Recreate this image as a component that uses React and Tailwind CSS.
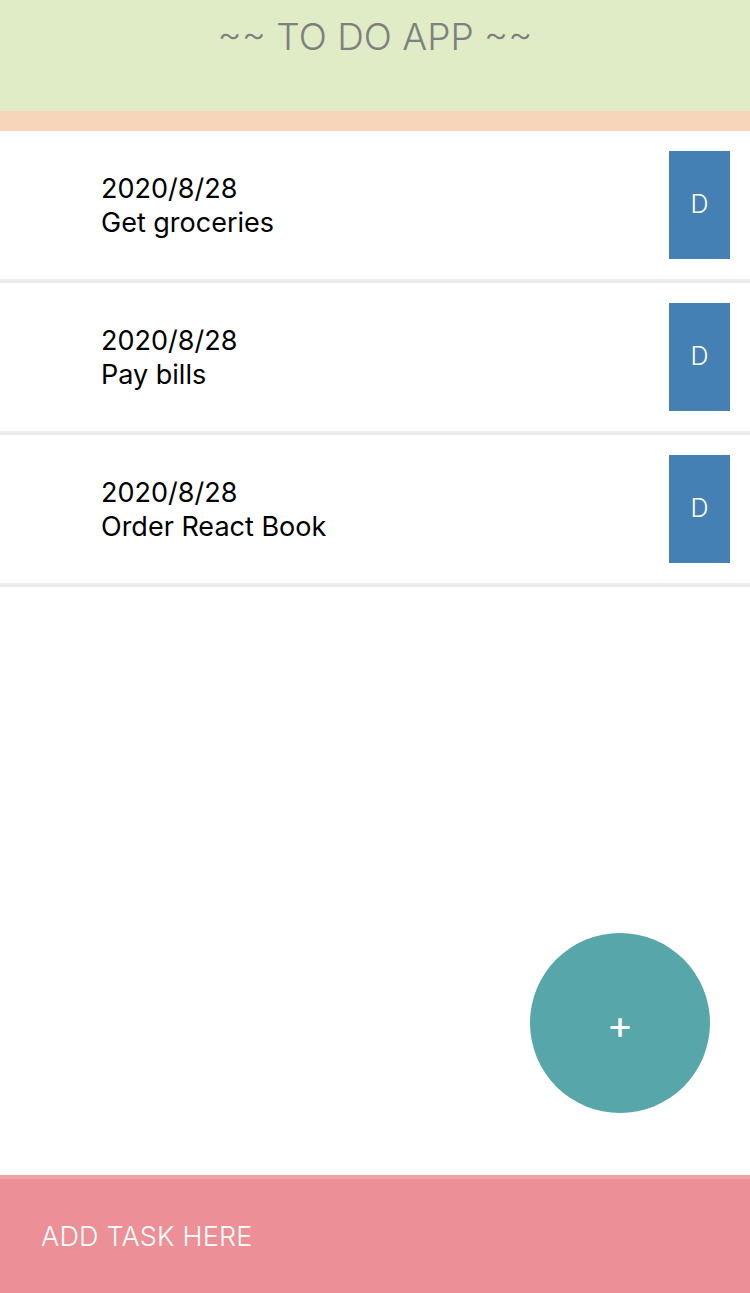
import React, { useState } from 'react';

const initialTasks = [
    { id: 1, date: '2020/8/28', text: 'Get groceries' },
    { id: 2, date: '2020/8/28', text: 'Pay bills' },
    { id: 3, date: '2020/8/28', text: 'Order React Book' },
];

const TaskRow = ({ task, onDelete }) => (
    <div className="flex items-stretch justify-between h-[152px] bg-white border-b-4 border-[#ebebeb] pt-5 pb-5 pr-5">
        <div className="flex flex-col justify-center pl-[101px] pt-[2px] text-[27px] leading-[34px] text-black">
            <span>{task.date}</span>
            <span>{task.text}</span>
        </div>
        <button
            onClick={() => onDelete(task.id)}
            className="w-[61px] bg-[#4580b5] text-white text-[25px] font-light flex items-center justify-center"
        >
            D
        </button>
    </div>
);

const App = () => {
    const [tasks, setTasks] = useState(initialTasks);

    const deleteTask = (id) => setTasks(tasks.filter((t) => t.id !== id));

    return (
        <div className="flex flex-col h-[1293px] w-[750px] bg-white font-['Inter',sans-serif]">
            {/* cabecera */}
            <div className="h-[111px] bg-[#e0ecc6] flex justify-center pt-[13px]">
                <h1 className="text-[37px] leading-[48px] text-[#7f7f7f] font-light">~~ TO DO APP ~~</h1>
            </div>
            <div className="h-5 bg-[#f6d5bb]"></div>

            <div className="flex-1 flex flex-col">
                {tasks.map((task) => (
                    <TaskRow key={task.id} task={task} onDelete={deleteTask} />
                ))}
                <div className="flex-1 flex items-end justify-end pr-10 pb-[62px]">
                    <button className="w-[180px] h-[180px] rounded-full bg-[#56a6aa] text-white text-[40px] pt-[4px] flex items-center justify-center">
                        +
                    </button>
                </div>
            </div>

            {/* barra inferior */}
            <div className="h-[118px] bg-[#ed8f96] border-t-4 border-[#f0a5a5] flex items-center pl-[41px] pt-[2px]">
                <span className="text-white text-[27px] font-light tracking-[0.2px]">ADD TASK HERE</span>
            </div>
        </div>
    );
};

export default App;
